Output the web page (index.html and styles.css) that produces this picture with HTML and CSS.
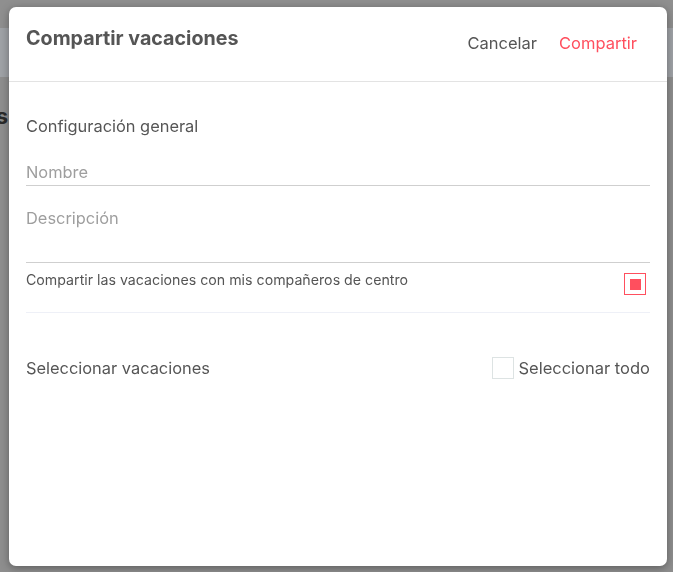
FILE: index.html
```html
<!DOCTYPE html>
<html lang="es">
<head>
<meta charset="UTF-8">
<meta name="viewport" content="width=device-width, initial-scale=1.0">
<title>Compartir vacaciones</title>
<link rel="stylesheet" href="styles.css">
</head>
<body>

<!-- pagina de fondo, tapada por el overlay -->
<div class="page">
  <div class="page-top"></div>
  <div class="page-bar"></div>
  <h1 class="page-title">Vacaciones</h1>
</div>

<div class="overlay">
  <div class="modal">
    <div class="modal-header">
      <h2 class="modal-title">Compartir vacaciones</h2>
      <div class="modal-actions">
        <button class="btn-link">Cancelar</button>
        <button class="btn-link btn-primary">Compartir</button>
      </div>
    </div>

    <div class="modal-body">
      <p class="section-label">Configuración general</p>

      <input class="field field-name" type="text" placeholder="Nombre">
      <textarea class="field field-area" placeholder="Descripción"></textarea>

      <div class="share-row">
        <span class="share-text">Compartir las vacaciones con mis compañeros de centro</span>
        <span class="check checked"><span class="check-dot"></span></span>
      </div>

      <div class="select-row">
        <span class="section-label">Seleccionar vacaciones</span>
        <label class="select-all">
          <span class="check"></span>
          Seleccionar todo
        </label>
      </div>
    </div>
  </div>
</div>

</body>
</html>
```

FILE: styles.css
```css
body, html {
  height: 100%;
  margin: 0;
  font-family: 'Inter', 'Liberation Sans', sans-serif;
  background: #8e8e8e;
  overflow: hidden;
}

.page {
  height: 100%;
}

.page-top {
  height: 28px;
  background: #8f8f8f;
}

.page-bar {
  height: 49px;
  background: #9fa2a6;
}

/* solo asoma la ultima letra por detras del modal */
.page-title {
  margin: 0;
  padding-top: 26px;
  width: 8px;
  direction: rtl;
  white-space: nowrap;
  overflow: hidden;
  font-size: 22px;
  font-weight: 700;
  color: #2a2a2a;
}

.overlay {
  position: fixed;
  top: 0;
  left: 0;
  right: 0;
  bottom: 0;
}

.modal {
  position: absolute;
  top: 7px;
  left: 9px;
  width: 658px;
  height: 559px;
  background: #fff;
  border-radius: 7px;
  box-shadow: 0 2px 8px rgba(0, 0, 0, 0.35);
}

.modal-header {
  display: flex;
  justify-content: space-between;
  height: 74px;
  border-bottom: 1px solid #e3e3e3;
  padding: 0 17px;
}

.modal-title {
  margin: 0;
  padding-top: 19px;
  font-size: 19.7px;
  font-weight: 700;
  color: #555;
}

.modal-actions {
  display: flex;
  gap: 22px;
  padding-top: 24px;
  padding-right: 13px;
}

.btn-link {
  background: none;
  border: none;
  padding: 0;
  height: 24px;
  font-family: inherit;
  font-size: 16.5px;
  color: #555;
  cursor: pointer;
}

.btn-primary {
  color: #ff4f5e;
}

.modal-body {
  padding: 0 17px;
}

.section-label {
  margin: 0;
  font-size: 16.4px;
  color: #555;
}

.modal-body > .section-label {
  padding-top: 34px;
  line-height: 20px;
}

.field {
  display: block;
  width: 100%;
  box-sizing: border-box;
  border: none;
  border-bottom: 1px solid #cfcfcf;
  outline: none;
  margin-top: 7px;
  padding: 16px 0 0;
  font-family: inherit;
  font-size: 16.4px;
  color: #555;
  background: none;
}

.field::placeholder {
  color: #9e9e9e;
}

.field-name {
  height: 43px;
}

.field-area {
  height: 70px;
  padding-top: 15px;
  resize: none;
  line-height: 20px;
}

.share-row {
  display: flex;
  justify-content: space-between;
  height: 49px;
  border-bottom: 1px solid #eef0f7;
}

.share-text {
  padding-top: 8px;
  font-size: 14.2px;
  color: #555;
}

.check {
  box-sizing: border-box;
  width: 22px;
  height: 22px;
  border: 1px solid #dde3e3;
  display: flex;
  align-items: center;
  justify-content: center;
}

.share-row .check {
  margin-top: 10px;
  margin-right: 4px;
}

.check.checked {
  border-color: #ff4f5e;
}

.check-dot {
  width: 11px;
  height: 11px;
  background: #ff4f5e;
}

.select-row {
  display: flex;
  justify-content: space-between;
  align-items: center;
  margin-top: 44px;
}

.select-all {
  display: flex;
  align-items: center;
  gap: 4px;
  font-size: 16.5px;
  color: #555;
}
```
